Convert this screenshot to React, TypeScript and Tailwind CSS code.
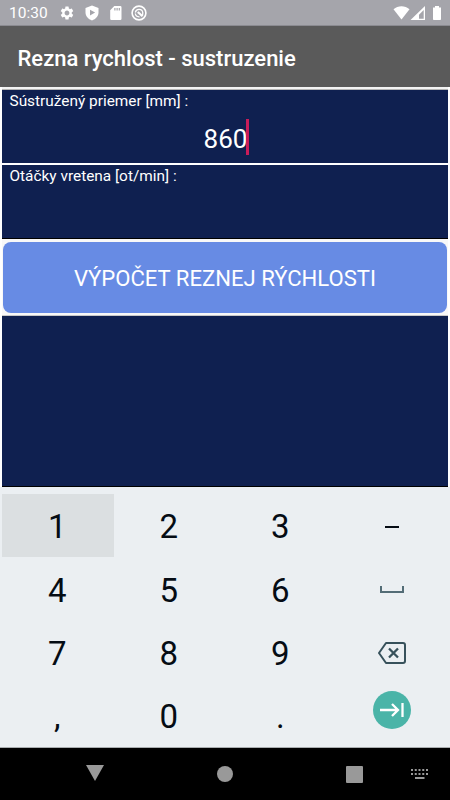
import { MdSettings } from "react-icons/md"

function ShieldIcon() {
  return (
    <svg className="w-[14px] h-4" viewBox="0 0 14 16" fill="white">
      <path fillRule="evenodd" d="M7 .5 13.5 3v4.600c0 3.600-2.700 6.700-6.500 7.900C3.200 14.300.5 11.200.5 7.600V3ZM5 4.800v5.600L10.100 7.600Z" />
    </svg>
  )
}

function SdCardIcon() {
  return (
    <svg className="w-3 h-4 ml-px -mr-px" viewBox="0 0 12 16" fill="white">
      <path fillRule="evenodd" d="M4.300 1h6q1.200 0 1.200 1.200v11.600q0 1.200-1.200 1.200h-8.900Q.200 15 .200 13.800V5.200ZM4.300 3v2.500h1.200V3ZM6.500 3v2.500h1.200V3ZM8.700 3v2.500h1.200V3Z" />
    </svg>
  )
}

function DataSaverIcon() {
  return (
    <svg className="w-4 h-4" viewBox="0 0 16 16" fill="none" stroke="white">
      <circle cx="8" cy="8" r="6.900" strokeWidth="1.600" />
      <path d="M4.300 7.500A3.800 3.800 0 0 1 11.800 7.800L11.500 10.500" strokeWidth="1.300" />
      <path d="M6.800 7 11.500 11.300" strokeWidth="2.200" />
      <path d="M4.300 8.500A4 4 0 0 0 8.500 11.800" strokeWidth="1.300" />
    </svg>
  )
}

function StatusBar() {
  return (
    <div className="h-[26px] bg-[#a5a5ab] border-b border-[#8b8b91] flex items-center justify-between px-[9px] text-white">
      <div className="flex items-center gap-[10px]">
        <span className="w-10 text-[15.5px] leading-none pt-[3px]">10:30</span>
        <MdSettings className="w-4 h-4" />
        <ShieldIcon />
        <SdCardIcon />
        <DataSaverIcon />
      </div>
      <svg className="w-[48px] h-4" viewBox="0 0 48 16" fill="white">
        <path d="M.5 4.200C5 .200 12 .200 16.500 4.200L8.500 14.500Z" />
        <path fillRule="evenodd" d="M32 1v14H17.500ZM30.700 5 26 9.700v4h4.700Z" />
        <path d="M42 1h4v1.500h2V14.200q0 .800-.800.800H40.800q-.800 0-.800-.800V2.500h2Z" />
      </svg>
    </div>
  )
}

function Field({ label, value, className }: { label: string; value?: string; className: string }) {
  return (
    <div className={`bg-[#0f2050] text-white ${className}`}>
      <div className="pl-[7.5px] pt-[2px] text-[15.4px] leading-[18px]">{label}</div>
      {value && (
        <div className="flex justify-center items-center mt-[9px]">
          <span className="text-[26px] leading-9 pt-[2px] -mb-[2px] pl-[3px] -mr-px">{value}</span>
          <span className="w-[3px] h-9 bg-[#c91d59]" />
        </div>
      )}
    </div>
  )
}

function SpaceIcon() {
  return (
    <svg className="w-6 h-[7px] mt-px" viewBox="0 0 24 7" fill="none" stroke="#536c76" strokeWidth="2">
      <path d="M1 0v6h22V0" />
    </svg>
  )
}

function BackspaceIcon() {
  return (
    <svg className="w-[28px] h-[22px] mt-[2px]" viewBox="0 0 28 22" fill="none" stroke="#37515b" strokeWidth="2">
      <path d="M8 1h17q2 0 2 2v16q0 2-2 2H8L1 11Z" strokeLinejoin="round" />
      <path d="m11 6.500 9 9m0-9-9 9" strokeWidth="2.300" />
    </svg>
  )
}

function NextButton() {
  return (
    <div className="w-[38px] h-[38px] rounded-full bg-[#4ab4a8] flex items-center justify-center mb-3">
      <svg className="w-6 h-[14px]" viewBox="0 0 24 14" fill="none" stroke="white" strokeWidth="2.300">
        <path d="M0 7h18M12 1l6 6-6 6M22.500 0v14" />
      </svg>
    </div>
  )
}

const keys = ["1", "2", "3", "–", "4", "5", "6", "space", "7", "8", "9", "back", ",", "0", ".", "next"]

function Key({ name }: { name: string }) {
  if (name === "space") return <SpaceIcon />
  if (name === "back") return <BackspaceIcon />
  if (name === "next") return <NextButton />
  if (name === "–") return <div className="w-[14px] h-[2px] mt-[2px] bg-[#050c14]" />
  return <span className="pt-[2.6px] pr-px">{name}</span>
}

function Keyboard() {
  return (
    <div className="h-[261px] bg-[#ebeff2] border-b border-[#a9adaf] pt-[7px] px-[2px]">
      <div className="grid grid-cols-4 auto-rows-[63.3px] text-[33px] leading-none text-[#050c14]">
        {keys.map((k) => (
          <div key={k} className={`flex items-center justify-center ${k === "1" ? "bg-[#dbdfe1]" : ""}`}>
            <Key name={k} />
          </div>
        ))}
      </div>
    </div>
  )
}

function NavBar() {
  return (
    <div className="h-[52px] bg-black flex items-center pl-[86px]">
      <svg className="w-[18px] h-4 mb-[2px]" viewBox="0 0 18 16" fill="#999">
        <path d="M0 0h18L9 16Z" />
      </svg>
      <div className="w-4 h-4 rounded-full bg-[#999] ml-[113px]" />
      <div className="w-[17px] h-[17px] rounded-[1px] bg-[#999] ml-[113px]" />
      <svg className="w-[17px] h-[10px] ml-[48px]" viewBox="0 0 17 10" stroke="#999" strokeWidth="2" fill="none">
        <path d="M0 1h17M0 5h17" strokeDasharray="2 1.750" />
        <path d="M4 9h9.500" />
      </svg>
    </div>
  )
}

export default function App() {
  return (
    <div className="w-[450px] h-[800px] flex flex-col overflow-hidden bg-white font-[Roboto,sans-serif]">
      <StatusBar />
      <header className="h-[61px] bg-[#5a5a5a] flex items-center pl-[17.5px] pt-[3px] text-white text-[22px] font-medium">
        Rezna rychlost - sustruzenie
      </header>

      <main className="h-[400px] flex flex-col px-[2px]">
        <div className="h-[3px] bg-[#f3f3f3] border-b border-[#b5b5b5]" />
        <Field label="Sústružený priemer [mm] :" value="860" className="h-[73px]" />
        <Field label="Otáčky vretena [ot/min] :" className="h-[74px] mt-[2px] border-b border-black" />
        <div className="h-[77px] bg-[#f8f8f8] border-b border-[#c9c9c9] px-[1px] pt-[3px]">
          <button className="w-full h-[71px] rounded-[8px] bg-[#678be4] text-white text-[22.1px] flex items-center justify-center pt-[3px]">
            VÝPOČET REZNEJ RÝCHLOSTI
          </button>
        </div>
        <div className="flex-1 bg-[#0f2050] border-b border-black" />
      </main>

      <Keyboard />
      <NavBar />
    </div>
  )
}
